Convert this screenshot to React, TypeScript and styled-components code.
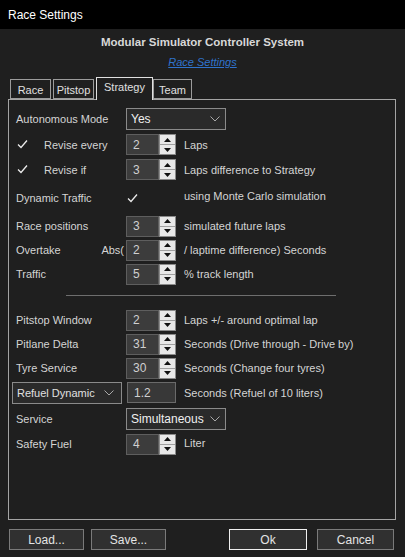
import React from 'react'
import styled, { createGlobalStyle } from 'styled-components'

const GlobalStyle = createGlobalStyle`
    html, body {
        margin: 0;
        padding: 0;
        background: #1f1f1f;
    }
    * {
        box-sizing: border-box;
    }
`

const Chevron = () => (
    <svg width="10" height="6" viewBox="0 0 10 6">
        <polyline points="0.5,0.5 5,5 9.5,0.5" fill="none" stroke="#a8a8a8" strokeWidth="1" />
    </svg>
)

const Check = () => (
    <svg width="13" height="13" viewBox="0 0 13 13">
        <polyline points="2,6.5 5,9.5 11,2.5" fill="none" stroke="#ececec" strokeWidth="1.3" />
    </svg>
)

const Spinner: React.FC<{ value: string }> = ({ value }) => (
    <SpinBox>
        <SpinInput>{value}</SpinInput>
        <SpinButtons>
            <SpinButton>
                <svg width="7" height="4" viewBox="0 0 7 4"><polygon points="3.5,0 7,4 0,4" fill="#111" /></svg>
            </SpinButton>
            <SpinButton>
                <svg width="7" height="4" viewBox="0 0 7 4"><polygon points="0,0 7,0 3.5,4" fill="#111" /></svg>
            </SpinButton>
        </SpinButtons>
    </SpinBox>
)

const App: React.FC = () => {
    return (
        <Window>
            <GlobalStyle />
            <TitleBar>Race Settings</TitleBar>
            <Header>
                <Heading>Modular Simulator Controller System</Heading>
                <HelpLink>Race Settings</HelpLink>
            </Header>
            <TabStrip>
                <Tab $width={41}>Race</Tab>
                <Tab $width={41}>Pitstop</Tab>
                <Tab $width={57} $active>Strategy</Tab>
                <Tab $width={39}>Team</Tab>
            </TabStrip>
            <Panel>
                <Row $height={26}>
                    <Label>Autonomous Mode</Label>
                    <Select $width={100}>Yes<Chevron /></Select>
                </Row>
                <Row $height={25}>
                    <Label><CheckBox><Check /></CheckBox>Revise every</Label>
                    <Spinner value="2" />
                    <Note>Laps</Note>
                </Row>
                <Row $height={25}>
                    <Label><CheckBox><Check /></CheckBox>Revise if</Label>
                    <Spinner value="3" />
                    <Note>Laps difference to Strategy</Note>
                </Row>
                <Row $height={32}>
                    <Label>Dynamic Traffic</Label>
                    <Control><CheckBox><Check /></CheckBox></Control>
                    <Note $shift={-2}>using Monte Carlo simulation</Note>
                </Row>
                <Row $height={24}>
                    <Label>Race positions</Label>
                    <Spinner value="3" />
                    <Note>simulated future laps</Note>
                </Row>
                <Row $height={24}>
                    <Label>Overtake<Prefix>Abs(</Prefix></Label>
                    <Spinner value="2" />
                    <Note>/ laptime difference) Seconds</Note>
                </Row>
                <Row $height={24}>
                    <Label>Traffic</Label>
                    <Spinner value="5" />
                    <Note>% track length</Note>
                </Row>
                <Separator />
                <Row $height={24}>
                    <Label>Pitstop Window</Label>
                    <Spinner value="2" />
                    <Note>Laps +/- around optimal lap</Note>
                </Row>
                <Row $height={24}>
                    <Label>Pitlane Delta</Label>
                    <Spinner value="31" />
                    <Note>Seconds (Drive through - Drive by)</Note>
                </Row>
                <Row $height={24}>
                    <Label>Tyre Service</Label>
                    <Spinner value="30" />
                    <Note>Seconds (Change four tyres)</Note>
                </Row>
                <Row $height={25}>
                    <LabelSelect>Refuel Dynamic<Chevron /></LabelSelect>
                    <TextInput>1.2</TextInput>
                    <Note>Seconds (Refuel of 10 liters)</Note>
                </Row>
                <Row $height={27}>
                    <Label>Service</Label>
                    <Select $width={100}>Simultaneous<Chevron /></Select>
                </Row>
                <Row $height={24}>
                    <Label>Safety Fuel</Label>
                    <Spinner value="4" />
                    <Note $shift={-1}>Liter</Note>
                </Row>
            </Panel>
            <Footer>
                <Group>
                    <Button>Load...</Button>
                    <Button>Save...</Button>
                </Group>
                <Group>
                    <Button $default $width={78}>Ok</Button>
                    <Button $width={77}>Cancel</Button>
                </Group>
            </Footer>
        </Window>
    )
}

const Window = styled.div`
    width: 405px;
    height: 557px;
    display: flex;
    flex-direction: column;
    background: #1f1f1f;
    color: #d4d4d4;
    font-family: "Liberation Sans", Arial, sans-serif;
    font-size: 11px;
    overflow: hidden;
`
const TitleBar = styled.div`
    height: 29px;
    background: #000;
    color: #fff;
    display: flex;
    align-items: center;
    padding-left: 8px;
    font-size: 12px;
`
const Header = styled.div`
    display: flex;
    flex-direction: column;
    align-items: center;
    padding-top: 6px;
`
const Heading = styled.div`
    font-weight: bold;
    font-size: 11.5px;
    line-height: 14px;
    color: #d8d8d8;
`
const HelpLink = styled.a`
    margin-top: 6px;
    line-height: 14px;
    font-style: italic;
    text-decoration: underline;
    color: #2f73cc;
    cursor: pointer;
`
const TabStrip = styled.div`
    display: flex;
    align-items: flex-end;
    height: 22px;
    margin-top: 8px;
    padding-left: 10px;
    position: relative;
    z-index: 1;
`
const Tab = styled.div<{ $width: number; $active?: boolean }>`
    width: ${p => p.$width}px;
    height: ${p => (p.$active ? 23 : 20)}px;
    margin-right: ${p => (p.$active ? 0 : 2)}px;
    margin-bottom: ${p => (p.$active ? -1 : 0)}px;
    display: flex;
    justify-content: center;
    align-items: ${p => (p.$active ? 'flex-start' : 'center')};
    padding-top: ${p => (p.$active ? 3 : 1)}px;
    background: #1f1f1f;
    border: 1px solid ${p => (p.$active ? '#e0e0e0' : '#9c9c9c')};
    border-bottom: ${p => (p.$active ? 'none' : '1px solid #9c9c9c')};
    color: #e0e0e0;
    font-size: 11px;
    &:last-child {
        margin-right: 0;
    }
`
const Panel = styled.div`
    height: 421px;
    margin: 0 9px 0 8px;
    border: 1px solid #a4a4a4;
    padding: 6px 0 0 7px;
    display: flex;
    flex-direction: column;
`
const Row = styled.div<{ $height: number }>`
    height: ${p => p.$height}px;
    display: flex;
    align-items: center;
`
const Label = styled.div`
    width: 110px;
    display: flex;
    align-items: center;
    padding-right: 2px;
    color: #d4d4d4;
`
const Prefix = styled.span`
    margin-left: auto;
`
const Control = styled.div`
    width: 50px;
    display: flex;
    align-items: center;
`
const CheckBox = styled.span`
    width: 13px;
    height: 13px;
    margin-right: 15px;
    display: inline-flex;
    background: #1f1f1f;
`
const Note = styled.div<{ $shift?: number }>`
    margin-left: 8px;
    position: relative;
    top: ${p => p.$shift || 0}px;
    color: #d4d4d4;
`
const Select = styled.div<{ $width: number }>`
    width: ${p => p.$width}px;
    height: 22px;
    display: flex;
    align-items: center;
    justify-content: space-between;
    padding: 0 5px 0 4px;
    background: #2a2a2a;
    border: 1px solid #8a8a8a;
    color: #f0f0f0;
    font-size: 12px;
`
const LabelSelect = styled(Select).attrs({ $width: 110 })`
    margin-left: -4px;
    font-size: 11px;
    color: #e0e0e0;
    padding-right: 7px;
`
const SpinBox = styled.div`
    width: 50px;
    height: 21px;
    display: flex;
`
const SpinInput = styled.div`
    width: 33px;
    display: flex;
    align-items: center;
    padding-left: 6px;
    background: #3c3c3c;
    border: 1px solid #5e5e5e;
    color: #d0d0d0;
    font-size: 12px;
`
const SpinButtons = styled.div`
    width: 17px;
    display: flex;
    flex-direction: column;
    border: 1px solid #8a8a8a;
    background: #e8e8e8;
`
const SpinButton = styled.div`
    flex: 1;
    display: flex;
    align-items: center;
    justify-content: center;
    &:first-child {
        border-bottom: 1px solid #a0a0a0;
    }
`
const TextInput = styled.div`
    width: 49px;
    height: 21px;
    margin-left: 5px;
    display: flex;
    align-items: center;
    padding-left: 6px;
    background: #383838;
    border: 1px solid #6a6a6a;
    color: #d0d0d0;
    font-size: 12px;
`
const Separator = styled.div`
    height: 22px;
    display: flex;
    align-items: flex-start;
    padding-top: 9px;
    &::before {
        content: '';
        margin-left: 50px;
        width: 270px;
        border-top: 1px solid #6e6e6e;
    }
`
const Footer = styled.div`
    margin-top: 9px;
    padding: 0 11px 0 9px;
    display: flex;
    justify-content: space-between;
`
const Group = styled.div`
    display: flex;
    gap: 7px;
    &:last-child {
        gap: 10px;
    }
`
const Button = styled.div<{ $width?: number; $default?: boolean }>`
    width: ${p => p.$width || 75}px;
    height: 21px;
    display: flex;
    align-items: center;
    justify-content: center;
    background: #303030;
    border: 1px solid ${p => (p.$default ? '#f0f0f0' : '#7a7a7a')};
    color: #e4e4e4;
    font-size: 12px;
`

export default App
